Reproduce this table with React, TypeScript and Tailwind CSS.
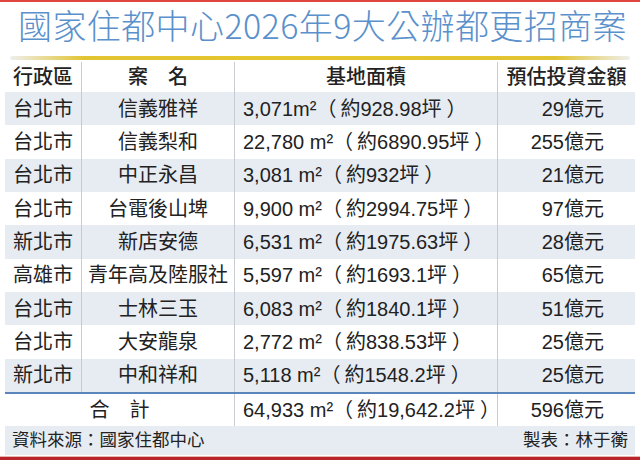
import React from "react";

const rows = [
  ["台北市", "信義雅祥", "3,071m²", "928.98", "29億元"],
  ["台北市", "信義梨和", "22,780 m²", "6890.95", "255億元"],
  ["台北市", "中正永昌", "3,081 m²", "932", "21億元"],
  ["台北市", "台電後山埤", "9,900 m²", "2994.75", "97億元"],
  ["新北市", "新店安德", "6,531 m²", "1975.63", "28億元"],
  ["高雄市", "青年高及陸服社", "5,597 m²", "1693.1", "65億元"],
  ["台北市", "士林三玉", "6,083 m²", "1840.1", "51億元"],
  ["台北市", "大安龍泉", "2,772 m²", "838.53", "25億元"],
  ["新北市", "中和祥和", "5,118 m²", "1548.2", "25億元"],
];

function Area({ m, p }: { m: string; p: string }) {
  return (
    <span className="whitespace-nowrap">
      {m}
      <span className="mr-[4px]">（</span>
      約{p}坪
      <span className="ml-[5px]">）</span>
    </span>
  );
}

export default function App() {
  return (
    <div className="w-[640px] h-[460px] bg-white flex flex-col overflow-hidden font-['Liberation_Sans','Noto_Sans_CJK_TC',sans-serif] text-[#222]">
      <div className="h-[2px] bg-[#e0463f]" />
      <div className="h-[46px] flex items-center px-[18px]">
        <h1 className="text-[34px] leading-none font-light tracking-[0.4px] font-['Noto_Sans_CJK_TC',sans-serif] text-[#5a90cb] whitespace-nowrap">
          國家住都中心2026年9大公辦都更招商案
        </h1>
      </div>
      <div className="h-[14px] flex items-end px-[10px] pb-[2px]">
        <div className="h-[4px] w-full rounded-full bg-[linear-gradient(90deg,rgba(200,200,190,0.3)_0%,#e2c432_12%,#e6c62c_50%,#e2c432_88%,rgba(200,200,190,0.3)_100%)]" />
      </div>
      <div className="px-[5px] flex flex-col">
        <div className="grid grid-cols-[76px_153px_263px_138px] h-[30px] text-[20px] font-medium">
          <div className="flex items-center justify-center">行政區</div>
          <div className="flex items-center justify-center border-l border-[#c8ccd2]">案　名</div>
          <div className="flex items-center justify-center border-l border-[#c8ccd2]">基地面積</div>
          <div className="flex items-center justify-center border-l border-[#c8ccd2]">預估投資金額</div>
        </div>
        <div className="grid grid-rows-9 h-[300px]">
          {rows.map((r, i) => (
            <div
              key={i}
              className={
                "grid grid-cols-[76px_153px_263px_138px] text-[20px] " +
                (i % 2 === 0 ? "bg-[#e7ecf2]" : "bg-white")
              }
            >
              <div className="flex items-center justify-center">{r[0]}</div>
              <div className="flex items-center justify-center border-l border-[#c8ccd2] whitespace-nowrap">{r[1]}</div>
              <div className="flex items-center pl-[8px] border-l border-[#c8ccd2]">
                <Area m={r[2]} p={r[3]} />
              </div>
              <div className="flex items-center justify-end pr-[31px] border-l border-[#c8ccd2]">{r[4]}</div>
            </div>
          ))}
        </div>
        <div className="h-[2px] bg-[#5b86bb]" />
        <div className="grid grid-cols-[229px_263px_138px] h-[32px] text-[20px]">
          <div className="flex items-center justify-center">合　計</div>
          <div className="flex items-center pl-[8px] border-l border-[#c8ccd2]">
            <Area m="64,933 m²" p="19,642.2" />
          </div>
          <div className="flex items-center justify-end pr-[31px] border-l border-[#c8ccd2]">596億元</div>
        </div>
        <div className="h-[29px] bg-[#e7ecf2] flex items-center justify-between px-[7px] text-[17.5px]">
          <span>資料來源：國家住都中心</span>
          <span>製表：林于蘅</span>
        </div>
      </div>
      <div className="mt-auto h-[1px] bg-[#eab3b3]" />
      <div className="h-[3px] bg-[#b8262c]" />
    </div>
  );
}
